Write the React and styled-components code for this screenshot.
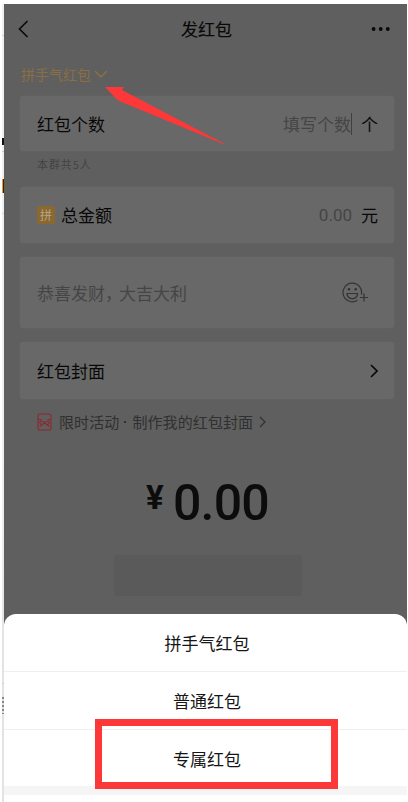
import React from 'react'
import styled, { createGlobalStyle } from 'styled-components'

const GlobalStyle = createGlobalStyle`
    * {
        box-sizing: border-box;
    }
    body {
        margin: 0;
        background: #fff;
        font-family: 'Noto Sans CJK SC', sans-serif;
    }
    svg {
        display: block;
        flex: none;
    }
`
const Screen = styled.div`
    position: relative;
    display: flex;
    width: 408px;
    height: 802px;
    padding: 4px 1px 0 2px;
    overflow: hidden;
`
const Edge = styled.div`
    width: 2px;
    flex: none;
    background: linear-gradient(#eef1f4 0, #eceff2 500px, #e3e3e3 640px);
`
const EdgeMark = styled.div`
    height: ${({ h }) => h}px;
    margin-top: ${({ gap }) => gap}px;
    background: ${({ color }) => color};
`
const Phone = styled.div`
    flex: 1;
    display: flex;
    flex-direction: column;
    background: #5f5f5f;
    color: #080808;
`
const Header = styled.header`
    display: grid;
    grid-template-columns: 60px 1fr 60px;
    align-items: center;
    height: 50px;
    padding: 0 16px 0 14px;

    svg:last-child {
        justify-self: end;
    }
`
const Title = styled.h1`
    margin: 0;
    padding-left: 4px;
    font-size: 17px;
    font-weight: 400;
    -webkit-text-stroke: 0.15px currentColor;
    line-height: 24px;
    text-align: center;
`
const TypePicker = styled.div`
    display: flex;
    align-items: center;
    gap: 3px;
    height: 42px;
    padding: 0 0 2px 17px;
    font-size: 14px;
    color: #8a6e44;
`
const Card = styled.section`
    display: flex;
    align-items: center;
    height: ${({ h }) => h}px;
    margin: ${({ top }) => top || 0}px 13px 0 16px;
    padding: 0 16px 0 17px;
    border-radius: 3px;
    background: #686868;
    box-shadow: 0 0 2px #666;
    font-size: 17px;
    line-height: 24px;
`
const Label = styled.span`
    flex: 1;
`
const Placeholder = styled.span`
    flex: ${({ grow }) => (grow ? 1 : 'none')};
    color: #454545;
`
const Comma = styled.span`
    letter-spacing: -3px;
`
const Digits = styled(Placeholder)`
    font-family: Roboto, sans-serif;
`
const Caret = styled.i`
    width: 1px;
    height: 22px;
    background: #404040;
`
const Unit = styled.span`
    margin-left: 9px;
`
const Hint = styled.p`
    height: 36px;
    margin: 0;
    padding: 4px 0 0 33px;
    font-size: 11px;
    line-height: 18px;
    letter-spacing: 0.9px;
    color: #434343;
`
const Luck = styled.span`
    width: 18px;
    height: 18px;
    margin-right: 6px;
    border-radius: 2px;
    background: #8b682f;
    color: #b5a68a;
    font-size: 12px;
    line-height: 17px;
    text-align: center;
`
const Promo = styled.div`
    display: flex;
    align-items: center;
    height: 46px;
    padding: 0 0 1px 33px;
    font-size: 15px;
    color: #303030;

    svg:last-child {
        margin-left: 6px;
    }
`
const PromoText = styled.span`
    margin-left: ${({ gap }) => gap}px;
    letter-spacing: 0.1px;
`
const PromoDot = styled.i`
    width: 2px;
    height: 2px;
    margin-left: 5px;
    background: #303030;
`
const Total = styled.div`
    display: flex;
    align-items: flex-start;
    justify-content: center;
    height: 110px;
    padding: 28px 0 0 4px;
    font-family: Roboto, sans-serif;
    font-weight: 500;
    font-size: 50px;
    line-height: 60px;
    letter-spacing: -0.8px;
    color: #0c0c0c;
`
const Yen = styled.span`
    margin-right: 10px;
    font-size: 33px;
    font-weight: 700;
    line-height: 50px;
`
const Submit = styled.div`
    align-self: center;
    width: 188px;
    height: 41px;
    margin-right: -4px;
    border-radius: 3px;
    background: #5a5a5a;
`
const Sheet = styled.div`
    flex: none;
    height: 188px;
    margin-top: auto;
    border-radius: 12px 12px 0 0;
    background: #fff;
    overflow: hidden;
`
const Option = styled.div`
    height: ${({ h }) => h}px;
    border-bottom: 1px solid ${({ last }) => (last ? '#fff' : '#efefef')};
    padding-left: 3px;
    font-size: 17px;
    line-height: 58px;
    text-align: center;
    color: #161616;
`
const Divider = styled.div`
    height: 9px;
    background: #f5f5f5;
`
const Highlight = styled.div`
    position: absolute;
    left: 95px;
    top: 719px;
    width: 243px;
    height: 70px;
    border: 7px solid #fd3838;
`
const Arrow = styled.svg`
    position: absolute;
    left: 105px;
    top: 87px;
`

const Chevron = ({ d, w, h, stroke = 1.6, color = 'currentColor' }) => (
    <svg width={w} height={h} viewBox={`0 0 ${w} ${h}`} fill="none" stroke={color} strokeWidth={stroke}>
        <path d={d} />
    </svg>
)

const Dots = () => (
    <svg width="20" height="6" viewBox="0 0 20 6" fill="#080808">
        <circle cx="2.6" cy="3" r="1.9" />
        <circle cx="9.7" cy="3" r="1.9" />
        <circle cx="16.8" cy="3" r="1.9" />
    </svg>
)

const SmileyIcon = styled.svg`
    margin-right: 9px;
`
const Smiley = () => (
    <SmileyIcon width="27" height="22" viewBox="0 0 27 22" fill="none" stroke="#333" strokeWidth="1.2">
        <path d="M19.4 12.500A9.300 9.300 0 1 0 15.500 18.200" />
        <path d="M5 11.500h10.600a5.300 5.300 0 0 1-10.600 0z" />
        <circle cx="7" cy="7.300" r="1.300" fill="#333" stroke="none" />
        <circle cx="13.700" cy="7.300" r="1.300" fill="#333" stroke="none" />
        <path d="M18 15.500h8M22 11.500v8" />
    </SmileyIcon>
)

const Envelope = () => (
    <svg width="15" height="18" viewBox="0 0 15 18" fill="none" stroke="#8c292e" strokeWidth="1.1">
        <rect x="1" y="1" width="13" height="16" rx="2" />
        <path d="M1 6.500H4.500M10.500 6.500H14" />
        <path d="M7.500 10C6 7.500 2.800 7.200 2.800 9.500S6 12 7.500 10C9 12 12.200 11.800 12.200 9.500S9 7.500 7.500 10M7 10.500L2.500 13.500M8 10.500L12.500 13.500" />
    </svg>
)

const App = () => (
    <Screen>
        <GlobalStyle />
        <Edge>
            <EdgeMark gap={31} h={1} color="#cfd2d5" />
            <EdgeMark gap={102} h={7} color="#111" />
            <EdgeMark gap={6} h={1} color="#cfd2d5" />
            <EdgeMark gap={27} h={14} color="linear-gradient(90deg, #e69a28 50%, #3a2108 50%)" />
            <EdgeMark gap={20} h={1} color="#d6d9dc" />
            <EdgeMark gap={469} h={1} color="#cfcfcf" />
            <EdgeMark gap={13} h={17} color="repeating-linear-gradient(#888 0 2px, #ddd 2px 4px)" />
        </Edge>
        <Phone>
            <Header>
                <Chevron d="M9.500 1L1.500 9L9.500 17" w={11} h={18} />
                <Title>发红包</Title>
                <Dots />
            </Header>
            <TypePicker>
                拼手气红包
                <Chevron d="M1 1L7 7L13 1" w={14} h={9} stroke={1.5} />
            </TypePicker>
            <Card h={55}>
                <Label>红包个数</Label>
                <Placeholder>填写个数</Placeholder>
                <Caret />
                <Unit>个</Unit>
            </Card>
            <Hint>本群共5人</Hint>
            <Card h={56}>
                <Luck>拼</Luck>
                <Label>总金额</Label>
                <Digits>0.00</Digits>
                <Unit>元</Unit>
            </Card>
            <Card h={71} top={14}>
                <Placeholder grow>恭喜发财<Comma>，</Comma>大吉大利</Placeholder>
                <Smiley />
            </Card>
            <Card h={57} top={14}>
                <Label>红包封面</Label>
                <Chevron d="M1 1L7 7L1 13" w={8} h={14} />
            </Card>
            <Promo>
                <Envelope />
                <PromoText gap={7}>限时活动</PromoText>
                <PromoDot />
                <PromoText gap={6}>制作我的红包封面</PromoText>
                <Chevron d="M1 1L6 6L1 11" w={7} h={12} stroke={1.2} />
            </Promo>
            <Total>
                <Yen>¥</Yen>0.00
            </Total>
            <Submit />
            <Sheet>
                <Option h={58}>拼手气红包</Option>
                <Option h={58}>普通红包</Option>
                <Option h={56} last>专属红包</Option>
                <Divider />
            </Sheet>
        </Phone>
        <Arrow width="120" height="58" viewBox="0 0 120 58" fill="#fd3838">
            <path d="M0 0L19 0L17 3L120 57L117 56.500L13 13.500Z" />
        </Arrow>
        <Highlight />
    </Screen>
)

export default App
